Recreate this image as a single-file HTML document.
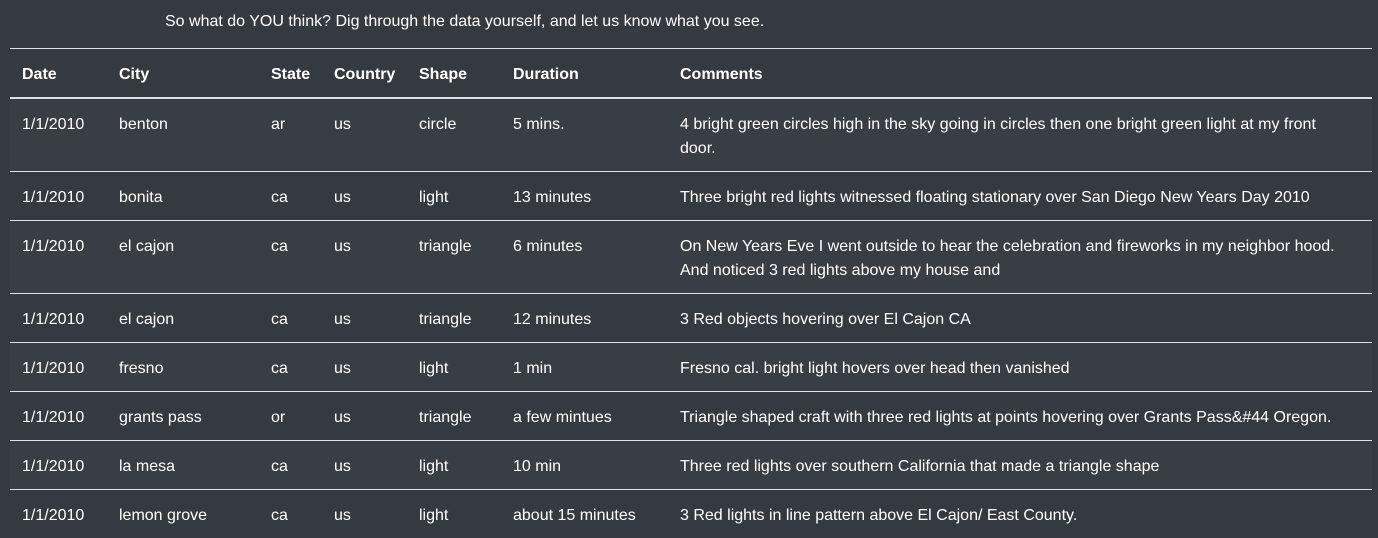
<!DOCTYPE html>
<html><head><style>
body{margin:0;background:#353a41;color:#fff;font-family:"Liberation Sans",sans-serif;font-size:16px;width:1378px;height:538px;overflow:hidden}
p{margin:0;position:absolute;left:165px;top:12px;line-height:20px}
table{position:absolute;left:10px;top:48px;width:1362px;border-collapse:collapse;table-layout:fixed}
th,td{text-align:left;vertical-align:top;padding:14px 12px 10px 12px;line-height:24px;border-top:1px solid #dee2e6}
th{font-weight:bold;border-bottom:2px solid #dee2e6;padding:14px 12px 10px}
td:last-child{padding-right:24px}
tbody tr:nth-child(odd){background:#393d44}
</style></head><body>
<p>So what do YOU think? Dig through the data yourself, and let us know what you see.</p>
<table>
<colgroup><col style="width:97px"><col style="width:152px"><col style="width:63px"><col style="width:85px"><col style="width:94px"><col style="width:167px"><col></colgroup>
<thead><tr><th>Date</th><th>City</th><th>State</th><th>Country</th><th>Shape</th><th>Duration</th><th>Comments</th></tr></thead>
<tbody>
<tr><td>1/1/2010</td><td>benton</td><td>ar</td><td>us</td><td>circle</td><td>5 mins.</td><td>4 bright green circles high in the sky going in circles then one bright green light at my front door.</td></tr>
<tr><td>1/1/2010</td><td>bonita</td><td>ca</td><td>us</td><td>light</td><td>13 minutes</td><td>Three bright red lights witnessed floating stationary over San Diego New Years Day 2010</td></tr>
<tr><td>1/1/2010</td><td>el cajon</td><td>ca</td><td>us</td><td>triangle</td><td>6 minutes</td><td>On New Years Eve I went outside to hear the celebration and fireworks in my neighbor hood. And noticed 3 red lights above my house and</td></tr>
<tr><td>1/1/2010</td><td>el cajon</td><td>ca</td><td>us</td><td>triangle</td><td>12 minutes</td><td>3 Red objects hovering over El Cajon CA</td></tr>
<tr><td>1/1/2010</td><td>fresno</td><td>ca</td><td>us</td><td>light</td><td>1 min</td><td>Fresno cal. bright light hovers over head then vanished</td></tr>
<tr><td>1/1/2010</td><td>grants pass</td><td>or</td><td>us</td><td>triangle</td><td>a few mintues</td><td>Triangle shaped craft with three red lights at points hovering over Grants Pass&amp;#44 Oregon.</td></tr>
<tr><td>1/1/2010</td><td>la mesa</td><td>ca</td><td>us</td><td>light</td><td>10 min</td><td>Three red lights over southern California that made a triangle shape</td></tr>
<tr><td>1/1/2010</td><td>lemon grove</td><td>ca</td><td>us</td><td>light</td><td>about 15 minutes</td><td>3 Red lights in line pattern above El Cajon/ East County.</td></tr>
</tbody></table>
</body></html>
